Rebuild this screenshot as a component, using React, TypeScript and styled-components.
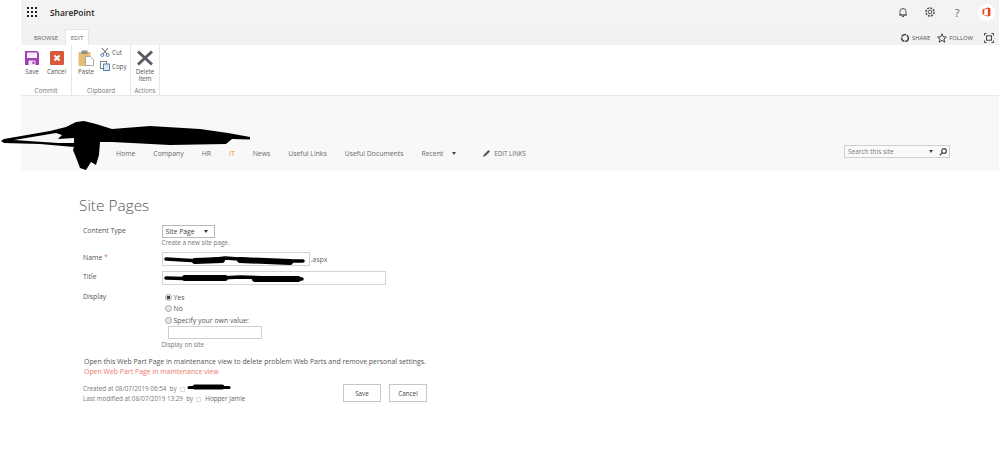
import React from "react";
import styled, { createGlobalStyle } from "styled-components";

const Global = createGlobalStyle`
  html, body { margin: 0; padding: 0; background: #fff; }
  body { font-family: "Open Sans", "Noto Sans", sans-serif; color: #444; overflow: hidden; }
  #root { width: 999px; height: 473px; }
`;
const Page = styled.div`position: relative; width: 999px; height: 473px; overflow: hidden; background: #fff;`;
const Chrome = styled.header`margin-left: 21px;`;
const SuiteBar = styled.div`height: 24px; background: #f3f3f3; display: flex; align-items: center; padding: 0 4px 0 6px;`;
const Waffle = styled.svg`width: 10px; height: 10px; fill: #222; margin-right: 13px;`;
const Brand = styled.span`font-size: 8.4px; font-weight: 600; color: #1f1f1f; flex: 1;`;
const SuiteIcons = styled.div`display: flex; align-items: center; gap: 15px;`;
const SuiteIcon = styled.svg`width: 12px; height: 12px; fill: none; stroke: #555; stroke-width: 1;`;
const Help = styled.span`width: 12px; text-align: center; font-size: 11px; color: #666;`;
const OfficeBadge = styled.div`width: 17px; height: 17px; border-radius: 50%; background: #fff; display: flex; align-items: center; justify-content: center;`;
const TabRow = styled.div`height: 21px; background: #f2f2f2; display: flex; align-items: flex-end; padding-left: 6px; `;
const Tab = styled.div<{ $active?: boolean }>`
  height: ${p => (p.$active ? "16px" : "15px")}; width: ${p => (p.$active ? "24px" : "38px")};
  display: flex; align-items: center; justify-content: center; font-size: 5.9px; color: #666;
  background: ${p => (p.$active ? "#fff" : "transparent")};
  ${p => p.$active && "border: 1px solid #e6e6e6; border-bottom: none; box-sizing: border-box;"}
`;
const TabActions = styled.div`margin-left: auto; height: 15px; display: flex; align-items: center; font-size: 5.9px; color: #555; padding-right: 5px;`;
const ActionIcon = styled.svg`width: 10px; height: 10px; fill: none; stroke: #444; stroke-width: 1;`;
const ActionLabel = styled.span`margin: 0 7px 0 2px;`;
const FocusIcon = styled(ActionIcon)`margin-left: 4px;`;
const Ribbon = styled.div`height: 51px; background: #fff; display: flex; border-bottom: 1px solid #e9e9e9; box-sizing: border-box;`;
const Group = styled.div<{ $w: number }>`
  width: ${p => p.$w}px; border-right: 1px solid #e6e6e6; display: flex; flex-direction: column; box-sizing: border-box;
`;
const GroupBody = styled.div`flex: 1; display: flex; padding-top: 5px;`;
const GroupLabel = styled.div`height: 8px; font-size: 6.2px; color: #777; text-align: center; line-height: 8px;`;
const BigBtn = styled.div<{ $w: number }>`
  width: ${p => p.$w}px; display: flex; flex-direction: column; align-items: center; font-size: 6.2px; line-height: 6.5px; color: #555; text-align: center;
`;
const BigIcon = styled.svg`width: 16px; height: 16px; margin-bottom: 3px; display: block;`;
const SmallStack = styled.div`display: flex; flex-direction: column; gap: 4px; margin-top: -3px;`;
const SmallBtn = styled.div`display: flex; align-items: center; gap: 2px; font-size: 6.2px; color: #555; height: 10px;`;
const SmallIcon = styled.svg`width: 10px; height: 10px; fill: none; stroke: #4a79a8; stroke-width: 0.9;`;
const TitleBand = styled.div`height: 75px; background: #f8f8f8; display: flex; align-items: flex-end; padding-bottom: 13px; box-sizing: border-box;`;
const Nav = styled.nav`margin-left: 95px; display: flex; align-items: center; font-size: 6.85px; color: #666; height: 10px;`;
const NavItem = styled.span<{ $on?: boolean }>`margin-right: 18px; color: ${p => (p.$on ? "#e99332" : "#6a6a6a")};`;
const Caret = styled.span`width: 0; height: 0; border-left: 2.5px solid transparent; border-right: 2.5px solid transparent; border-top: 3px solid #444; margin: 0 27px 0 -9px;`;
const EditLinks = styled.span`font-size: 6.2px; color: #666; display: flex; align-items: center; gap: 4px;`;
const Pencil = styled.svg`width: 7px; height: 7px; fill: #555;`;
const Search = styled.div`
  margin-left: auto; margin-right: 49px; width: 106px; height: 13px; border: 1px solid #d0d0d0; box-sizing: border-box; background: #fafafa;
  display: flex; align-items: center; font-size: 6.5px; color: #777; padding: 0 2px 0 3px;
`;
const SearchText = styled.span`flex: 1;`;
const SearchCaret = styled(Caret)`margin: 0 6px 0 0;`;
const SearchIcon = styled.svg`width: 8px; height: 8px; fill: none; stroke: #444; stroke-width: 1.2;`;
const Main = styled.main`padding: 24px 0 0 79px;`;
const Title = styled.h1`margin: 0 0 8px; font-size: 15.4px; font-weight: 300; color: #555; line-height: 22px; font-family: "Open Sans", sans-serif;`;
const FormRow = styled.div<{ $h: number }>`display: flex; height: ${p => p.$h}px; padding-left: 4px;`;
const FieldLabel = styled.div`width: 78.5px; font-size: 6.9px; color: #555; line-height: 11px;`;
const Star = styled.span`color: #d9766a;`;
const Field = styled.div`font-size: 6.9px; color: #555;`;
const Select = styled.div`
  width: 53px; height: 13px; border: 1px solid #b9b9b9; box-sizing: border-box; display: flex; align-items: center; justify-content: space-between;
  padding: 0 6px 0 3px; background: #fff; color: #444; font-size: 6.9px;
`;
const SelCaret = styled(Caret)`margin: 0; border-top-color: #333;`;
const Hint = styled.div`font-size: 6.3px; color: #777; line-height: 10px;`;
const InputLine = styled.div`display: flex; align-items: center; gap: 1px; font-size: 6.9px; color: #666; height: 14px;`;
const TextBox = styled.div<{ $w: number }>`width: ${p => p.$w}px; height: 14px; border: 1px solid #d4d4d4; box-sizing: border-box; background: #fff;`;
const RadioList = styled(Field)`padding-top: 1px;`;
const RadioLine = styled.div`display: flex; align-items: center; gap: 2px; height: 11.3px; font-size: 6.9px; color: #555; padding-left: 3px;`;
const Radio = styled.span<{ $on?: boolean }>`
  width: 7px; height: 7px; border-radius: 50%; border: 1px solid #aaa; box-sizing: border-box; background: ${p => (p.$on ? "radial-gradient(circle,#444 0 1.6px,#e8e8e8 2px)" : "#e6e6e6")};
`;
const OwnValue = styled.div`margin: 0 0 0 6px; width: 94px; height: 13px; border: 1px solid #cfcfcf; box-sizing: border-box;`;
const DisplayHint = styled(Hint)`margin-top: 1px;`;
const Maintenance = styled.div`margin: 8px 0 0 5px; font-size: 6.93px; line-height: 10px; color: #555;`;
const MaintLink = styled.div`color: #ee7a6c;`;
const Footer = styled.div`display: flex; margin: 7px 0 0 4px; width: 344px; justify-content: space-between; align-items: flex-start;`;
const Meta = styled.div`font-size: 6.3px; line-height: 10px; color: #777; padding-top: 0;`;
const MetaLine = styled.div`display: flex; align-items: center; gap: 2px;`;
const Presence = styled.span`width: 5px; height: 5px; border: 1px solid #ddd; box-sizing: border-box; margin-left: 1px;`;
const Person = styled.span`margin-left: 2px; color: #666;`;
const Buttons = styled.div`display: flex; gap: 8px;`;
const Btn = styled.div`width: 38px; height: 18px; border: 1px solid #c6c6c6; box-sizing: border-box; display: flex; align-items: center; justify-content: center; font-size: 6.3px; color: #444;`;
const Scribble = styled.svg`position: absolute; left: 0; top: 0; width: 999px; height: 473px; pointer-events: none;`;

const dots = [0, 4, 8].flatMap(y => [0, 4, 8].map(x => <rect key={`${x}-${y}`} x={x} y={y} width="2" height="2" />));

export default function App() {
  return (
    <Page>
      <Global />
      <Chrome>
        <SuiteBar>
          <Waffle viewBox="0 0 10 10">{dots}</Waffle>
          <Brand>SharePoint</Brand>
          <SuiteIcons>
            <SuiteIcon viewBox="0 0 12 12"><path d="M3 9V5.5a3 3 0 0 1 6 0V9zM2 9h8M5 10.5h2" /></SuiteIcon>
            <SuiteIcon viewBox="0 0 12 12"><circle cx="6" cy="6" r="1.8" /><circle cx="6" cy="6" r="4" strokeDasharray="2 1.1" strokeWidth="1.6" /></SuiteIcon>
            <Help>?</Help>
            <OfficeBadge>
              <svg width="9" height="10" viewBox="0 0 9 10"><path d="M0.5 2.4 5.8 0.4 8.4 1.2V8.8L5.8 9.6 0.5 7.8 5.8 8.4V1.8L2.3 2.6V7.1L0.5 7.8Z" fill="#e8481c" /></svg>
            </OfficeBadge>
          </SuiteIcons>
        </SuiteBar>
        <TabRow>
          <Tab>BROWSE</Tab>
          <Tab $active>EDIT</Tab>
          <TabActions>
            <ActionIcon viewBox="0 0 10 10"><circle cx="5" cy="5" r="3.4" strokeWidth="1.5" strokeDasharray="5 0.8" /></ActionIcon>
            <ActionLabel>SHARE</ActionLabel>
            <ActionIcon viewBox="0 0 10 10"><path d="M5 .8 6.2 3.8 9.4 4 6.9 6 7.8 9.2 5 7.4 2.2 9.2 3.1 6 .6 4 3.8 3.8Z" /></ActionIcon>
            <ActionLabel>FOLLOW</ActionLabel>
            <FocusIcon viewBox="0 0 10 10"><path d="M.5 2.5v-2h2M7.5.5h2v2M9.5 7.5v2h-2M2.5 9.5h-2v-2" /><rect x="2.5" y="2.8" width="5" height="4.4" /></FocusIcon>
          </TabActions>
        </TabRow>
        <Ribbon>
          <Group $w={51}>
            <GroupBody>
              <BigBtn $w={22}>
                <BigIcon viewBox="0 0 16 16"><path d="M1 1h12l2 2v12H1z" fill="#a33fb5" /><rect x="3" y="2.5" width="10" height="5.5" fill="#f7eff8" /><rect x="4.5" y="10.5" width="7" height="4.5" fill="#f3e6f5" /><rect x="8.5" y="11.5" width="2" height="2.5" fill="#a33fb5" /></BigIcon>
                Save
              </BigBtn>
              <BigBtn $w={27}>
                <BigIcon viewBox="0 0 16 16"><rect x="1" y="1" width="14" height="14" rx="1" fill="#d9593a" /><path d="M5.5 5.5l5 5M10.5 5.5l-5 5" stroke="#fff" strokeWidth="2" /></BigIcon>
                Cancel
              </BigBtn>
            </GroupBody>
            <GroupLabel>Commit</GroupLabel>
          </Group>
          <Group $w={59}>
            <GroupBody>
              <BigBtn $w={28}>
                <BigIcon viewBox="0 0 16 16"><rect x="0.5" y="2" width="12" height="14" rx="1" fill="#e6bd74" /><rect x="3.5" y="0.5" width="6" height="3.5" fill="#8f8f8f" /><path d="M7.5 6.5h5l3 3v6h-8z" fill="#fff" stroke="#999" strokeWidth=".8" /></BigIcon>
                Paste
              </BigBtn>
              <SmallStack>
                <SmallBtn>
                  <SmallIcon viewBox="0 0 10 10"><path d="M2 1l5 6M8 1L3 7" stroke="#555" /><circle cx="2.3" cy="8" r="1.5" /><circle cx="7.7" cy="8" r="1.5" /></SmallIcon>
                  Cut
                </SmallBtn>
                <SmallBtn>
                  <SmallIcon viewBox="0 0 10 10"><rect x="0.5" y="0.5" width="6" height="7" stroke="#777" /><rect x="3.5" y="3" width="6" height="6.5" fill="#dce8f3" /></SmallIcon>
                  Copy
                </SmallBtn>
              </SmallStack>
            </GroupBody>
            <GroupLabel>Clipboard</GroupLabel>
          </Group>
          <Group $w={29}>
            <GroupBody>
              <BigBtn $w={28}>
                <BigIcon viewBox="0 0 16 16"><path d="M1 1.5l14 13M15 1.5 1 14.5" stroke="#5a5a64" strokeWidth="3" /></BigIcon>
                Delete<br />Item
              </BigBtn>
            </GroupBody>
            <GroupLabel>Actions</GroupLabel>
          </Group>
        </Ribbon>
        <TitleBand>
          <Nav>
            <NavItem>Home</NavItem>
            <NavItem>Company</NavItem>
            <NavItem>HR</NavItem>
            <NavItem $on>IT</NavItem>
            <NavItem>News</NavItem>
            <NavItem>Useful Links</NavItem>
            <NavItem>Useful Documents</NavItem>
            <NavItem>Recent</NavItem>
            <Caret />
            <EditLinks>
              <Pencil viewBox="0 0 7 7"><path d="M0 7l1-2.5L5.5 0 7 1.5 2.5 6z" /></Pencil>
              EDIT LINKS
            </EditLinks>
          </Nav>
          <Search>
            <SearchText>Search this site</SearchText>
            <SearchCaret />
            <SearchIcon viewBox="0 0 8 8"><circle cx="5" cy="3" r="2.3" /><path d="M3.3 4.7.8 7.4" /></SearchIcon>
          </Search>
        </TitleBand>
      </Chrome>
      <Main>
        <Title>Site Pages</Title>
        <FormRow $h={27}>
          <FieldLabel>Content Type</FieldLabel>
          <Field>
            <Select>Site Page<SelCaret /></Select>
            <Hint>Create a new site page.</Hint>
          </Field>
        </FormRow>
        <FormRow $h={19}>
          <FieldLabel>Name <Star>*</Star></FieldLabel>
          <InputLine><TextBox $w={148} /> .aspx</InputLine>
        </FormRow>
        <FormRow $h={20}>
          <FieldLabel>Title</FieldLabel>
          <InputLine><TextBox $w={224} /></InputLine>
        </FormRow>
        <FormRow $h={58}>
          <FieldLabel>Display</FieldLabel>
          <RadioList>
            <RadioLine><Radio $on />Yes</RadioLine>
            <RadioLine><Radio />No</RadioLine>
            <RadioLine><Radio />Specify your own value:</RadioLine>
            <OwnValue />
            <DisplayHint>Display on site</DisplayHint>
          </RadioList>
        </FormRow>
        <Maintenance>
          Open this Web Part Page in maintenance view to delete problem Web Parts and remove personal settings.
          <MaintLink>Open Web Part Page in maintenance view</MaintLink>
        </Maintenance>
        <Footer>
          <Meta>
            <MetaLine>Created at 08/07/2019 06:54 &nbsp;by <Presence /></MetaLine>
            <MetaLine>Last modified at 08/07/2019 13:29 &nbsp;by <Presence /><Person>Hopper Jamie</Person></MetaLine>
          </Meta>
          <Buttons>
            <Btn>Save</Btn>
            <Btn>Cancel</Btn>
          </Buttons>
        </Footer>
      </Main>
      <Scribble viewBox="0 0 999 473">
        <path d="M50 131 L66 127 L76 122 L84 121 L96 124 L112 129 L150 126 L200 129 L228 133 L250 137 L250 139.5 L232 139 L226 144 L170 145 L112 142 L100 142 L99 155 L96 165 L91 162 L86 170 L80 168 L77 160 L73 150 L74 147 L40 144 L4 143 L1 141 L4 139 Z M56 133 L14 140 L58 143 L74 143 L74 138 L58 139 L62 135 Z" fill="#000" fillRule="evenodd" />
        <g fill="none" stroke="#000" strokeLinecap="round" strokeLinejoin="round">
          <path d="M166 259 L200 261 L225 258 L265 261 L303 261" strokeWidth="3.5" />
          <path d="M195 261 L222 260 M240 260 L290 262" strokeWidth="6" />
          <path d="M166 278 L200 279 L240 277 L302 279" strokeWidth="3.5" />
          <path d="M185 278 L225 278 M255 279 L298 279" strokeWidth="6" />
          <path d="M189 387.5 L229 387.5" strokeWidth="3" />
          <path d="M195 387 L222 387" strokeWidth="5" />
        </g>
      </Scribble>
    </Page>
  );
}
